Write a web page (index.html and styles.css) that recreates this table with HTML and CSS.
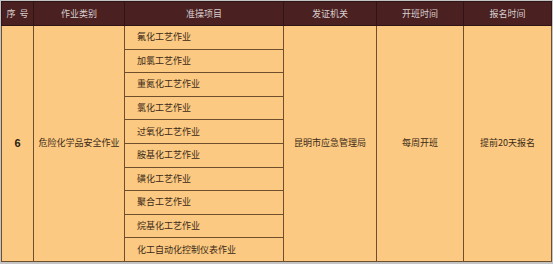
FILE: index.html
```html
<!DOCTYPE html>
<html lang="zh">
<head>
<meta charset="utf-8">
<link rel="stylesheet" href="styles.css">
</head>
<body>
<table class="sched">
  <colgroup>
    <col class="c-no"><col class="c-cat"><col class="c-item"><col class="c-org"><col class="c-open"><col class="c-reg">
  </colgroup>
  <thead>
    <tr class="head">
      <th>序&nbsp;&nbsp;号</th><th>作业类别</th><th>准操项目</th><th>发证机关</th><th>开班时间</th><th>报名时间</th>
    </tr>
  </thead>
  <tbody>
    <tr>
      <td rowspan="10" class="no">6</td>
      <td rowspan="10" class="mid">危险化学品安全作业</td>
      <td class="item">氟化工艺作业</td>
      <td rowspan="10" class="mid">昆明市应急管理局</td>
      <td rowspan="10" class="mid">每周开班</td>
      <td rowspan="10" class="mid">提前20天报名</td>
    </tr>
    <tr><td class="item">加氯工艺作业</td></tr>
    <tr><td class="item">重氮化工艺作业</td></tr>
    <tr><td class="item">氯化工艺作业</td></tr>
    <tr><td class="item">过氧化工艺作业</td></tr>
    <tr><td class="item">胺基化工艺作业</td></tr>
    <tr><td class="item">磺化工艺作业</td></tr>
    <tr><td class="item">聚合工艺作业</td></tr>
    <tr><td class="item">烷基化工艺作业</td></tr>
    <tr><td class="item">化工自动化控制仪表作业</td></tr>
  </tbody>
</table>
</body>
</html>
```
FILE: styles.css
```css
html, body {
  margin: 0;
  padding: 0;
  background: #c4c4c4;
}
body {
  padding: 1px 0 0 1px;
  font-family: "Noto Sans CJK SC", "Noto Sans", sans-serif;
}
.sched {
  border-collapse: collapse;
  table-layout: fixed;
  width: 550px;
  height: 260px;
  background: #fbc981;
  color: #3b2a18;
  font-size: 9px;
}
.c-no { width: 32px; }
.c-cat { width: 91px; }
.c-item { width: 159px; }
.c-org { width: 93px; }
.c-open { width: 87px; }
.c-reg { width: 88px; }
.sched th, .sched td {
  border: 1px solid #6e4e2c;
  padding: 0;
  line-height: 12px;
}
.head { height: 24px; }
.head th {
  background: #4a2020;
  color: #d9cfcf;
  font-weight: normal;
  text-align: center;
  border-color: #2e1414;
}
.sched tbody tr { height: 23.6px; }
.item {
  text-align: left;
  padding-left: 12px !important;
}
.mid {
  text-align: center;
  vertical-align: middle;
}
.no {
  text-align: center;
  font-size: 11px;
  font-weight: bold;
  font-family: "Liberation Sans", sans-serif;
  color: #2a1d10;
}
```
